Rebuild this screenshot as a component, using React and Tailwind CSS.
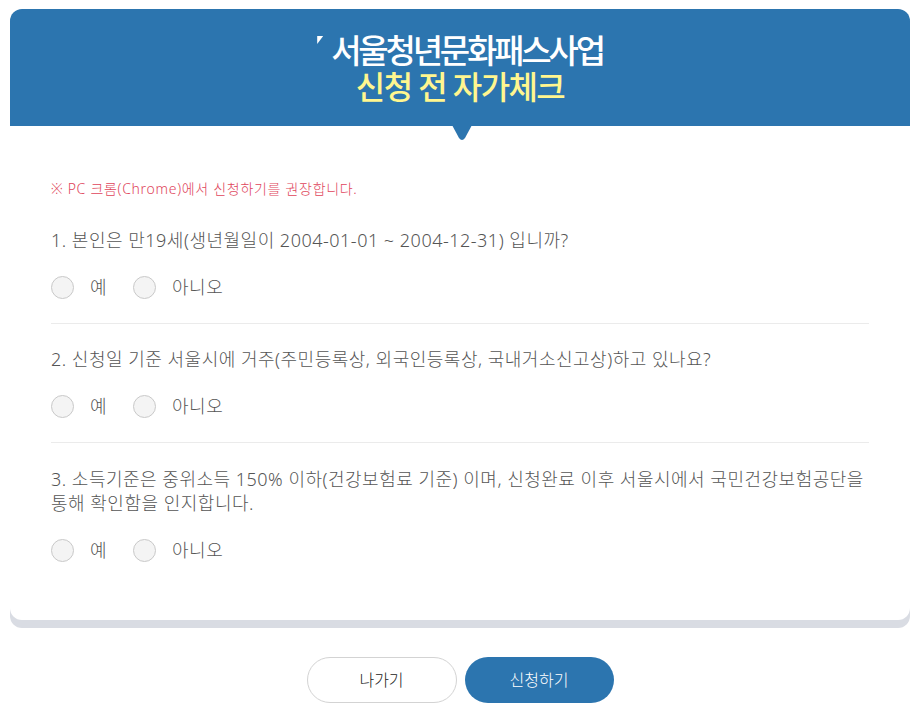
const questions = [
  {
    id: "q1",
    text: "1. 본인은 만19세(생년월일이 2004-01-01 ~ 2004-12-31) 입니까?",
    mt: "mt-[30px]",
  },
  {
    id: "q2",
    text: "2. 신청일 기준 서울시에 거주(주민등록상, 외국인등록상, 국내거소신고상)하고 있나요?",
    mt: "mt-[23px]",
  },
  {
    id: "q3",
    text: "3. 소득기준은 중위소득 150% 이하(건강보험료 기준) 이며, 신청완료 이후 서울시에서 국민건강보험공단을 통해 확인함을 인지합니다.",
    mt: "mt-[24px]",
  },
];

function Radio({ label }) {
  return (
    <label className="flex items-center cursor-pointer h-[23px]">
      <span className="w-[23px] h-[23px] rounded-full border border-[#c9c9c9] bg-[#f4f4f4]" />
      <span className="ml-[16px] text-[18px] leading-[23px] tracking-[0.5px] font-light text-[#555]">
        {label}
      </span>
    </label>
  );
}

export default function App() {
  return (
    <div
      className="min-h-screen bg-white pt-[9px]"
      style={{ fontFamily: '"Noto Sans", "Noto Sans CJK KR", sans-serif' }}
    >
      <div className="ml-[10px] mr-[13px]">
        {/* HEADER */}
        <div className="relative h-[117px] bg-[#2c75af] rounded-t-[12px] flex flex-col items-center pt-[24px]">
          <div className="flex items-start text-white text-[33px] leading-[36px] tracking-[-3.2px] font-medium">
            <span className="mt-[3px] mr-[8px] w-[6px] h-[8px] bg-white [clip-path:polygon(0_0,100%_0,0_100%)]" />
            <span>서울청년문화패스사업</span>
          </div>
          <div className="text-[#fff68f] text-[32px] leading-[36px] tracking-[-1.6px] font-medium">
            신청 전 자가체크
          </div>
          <svg
            className="absolute left-[442px] top-[116px]"
            width="20"
            height="16"
            viewBox="0 0 20 16"
          >
            <path d="M0 0 H20 L13 13 Q10 17 7 13 Z" fill="#2c75af" />
          </svg>
        </div>

        {/* BODY */}
        <div className="bg-white rounded-b-[12px] shadow-[0_8px_0_#d9dce3] px-[41px] pt-[54px] pb-[58px]">
          <p className="text-[14px] text-[#e0455b] leading-[18px] tracking-[0.7px] font-light">
            ※ PC 크롬(Chrome)에서 신청하기를 권장합니다.
          </p>

          {questions.map((q, i) => (
            <div
              key={q.id}
              className={
                i < questions.length - 1
                  ? "border-b border-[#ebebeb] pb-[24px]"
                  : ""
              }
            >
              <p
                className={
                  q.mt +
                  " text-[18px] leading-[24px] tracking-[0.5px] font-light text-[#555]"
                }
              >
                {q.text}
              </p>
              <div className="flex gap-[26px] mt-[24px]">
                <Radio label="예" />
                <Radio label="아니오" />
              </div>
            </div>
          ))}
        </div>

        {/* BUTTONS */}
        <div className="flex justify-center gap-[8px] mt-[37px]">
          <button className="w-[150px] h-[46px] rounded-full border border-[#d3d3d3] bg-white text-[16px] font-light text-[#222]">
            나가기
          </button>
          <button className="w-[149px] h-[46px] rounded-full bg-[#2c75af] text-[16px] font-light text-white">
            신청하기
          </button>
        </div>
      </div>
    </div>
  );
}
